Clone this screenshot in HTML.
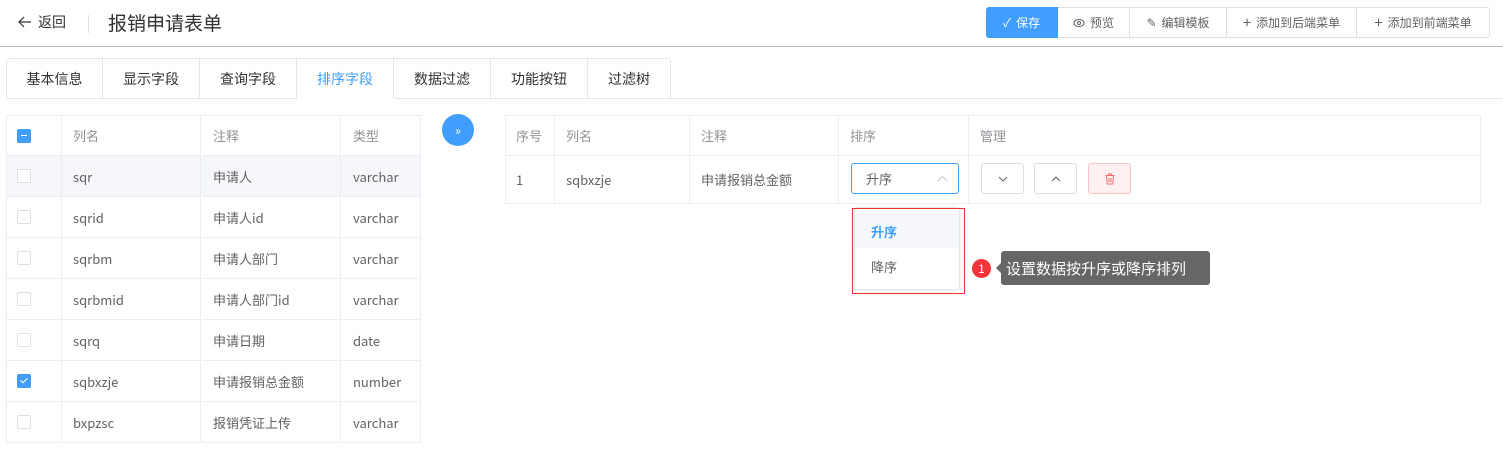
<!DOCTYPE html>
<html><head><meta charset="utf-8"><style>
*{box-sizing:border-box;margin:0;padding:0}
body{width:1503px;height:453px;background:#fff;font-family:"Noto Sans CJK SC","Liberation Sans",sans-serif;color:#606266;font-size:13px;position:relative;overflow:hidden}
.a{position:absolute}
.c{display:flex;align-items:center}
.tb{position:absolute;top:7px;height:31px;border:1px solid #dcdfe6;border-left:none;display:flex;align-items:center;justify-content:center;font-size:12px;color:#606266;background:#fff;gap:5px}
.tab{position:absolute;top:58px;height:41px;border:1px solid #e4e7ed;border-left:none;display:flex;align-items:center;justify-content:center;font-size:14px;color:#303133;background:#fff}
.cell{position:absolute;border-right:1px solid #ebeef5;border-bottom:1px solid #ebeef5;display:flex;align-items:center;padding-left:11px;font-size:13px;color:#606266;line-height:1}
.hd{color:#909399}
.cb{width:14px;height:14px;border:1px solid #dcdfe6;border-radius:2px;background:#fff;position:absolute;left:17px}
.btn{position:absolute;top:163px;width:43px;height:31px;border:1px solid #dcdfe6;border-radius:3px;display:flex;align-items:center;justify-content:center}
</style></head><body>
<div class="a c" style="left:18px;top:12px;font-size:14px;color:#303133;gap:6px"><svg width="14" height="12" viewBox="0 0 14 12"><path d="M13 6H2M6 1L1 6l5 5" stroke="#303133" stroke-width="1.2" fill="none"/></svg>返回</div>
<div class="a" style="left:88px;top:15px;width:1px;height:18px;background:#dcdfe6"></div>
<div class="a" style="left:108px;top:9px;font-size:19px;color:#303133">报销申请表单</div>
<div class="tb" style="left:986px;width:72px;background:#409eff;border-color:#409eff;color:#fff;border-radius:3px 0 0 3px"><span>✓</span>保存</div>
<div class="tb" style="left:1058px;width:72px"><svg width="12" height="10" viewBox="0 0 12 10"><ellipse cx="6" cy="5" rx="5" ry="3.5" stroke="#606266" fill="none"/><circle cx="6" cy="5" r="1.5" stroke="#606266" fill="none"/></svg>预览</div>
<div class="tb" style="left:1130px;width:97px"><span>✎</span>编辑模板</div>
<div class="tb" style="left:1227px;width:130px"><span style="font-size:15px">+</span>添加到后端菜单</div>
<div class="tb" style="left:1357px;width:133px;border-radius:0 3px 3px 0"><span style="font-size:15px">+</span>添加到前端菜单</div>
<div class="a" style="left:0;top:46px;width:1503px;height:1px;background:#c0c0c0"></div>
<div class="a" style="left:6px;top:98px;width:1497px;height:1px;background:#e4e7ed"></div>
<div class="tab" style="left:6px;width:97px;border-left:1px solid #e4e7ed;border-radius:3px 0 0 0">基本信息</div>
<div class="tab" style="left:103px;width:97px">显示字段</div>
<div class="tab" style="left:200px;width:97px">查询字段</div>
<div class="tab" style="left:297px;width:97px;color:#409eff;border-bottom-color:#fff">排序字段</div>
<div class="tab" style="left:394px;width:97px">数据过滤</div>
<div class="tab" style="left:491px;width:97px">功能按钮</div>
<div class="tab" style="left:588px;width:83px;border-radius:0 3px 0 0">过滤树</div>

<div class="a" style="left:6px;top:115px;width:416px;height:328px;border-left:1px solid #ebeef5;border-top:1px solid #ebeef5"></div>
<div class="a" style="left:7px;top:156px;width:414px;height:40px;background:#f5f7fa"></div>
<div id="lt"></div>
<script>
var rows=[["列名","注释","类型"],["sqr","申请人","varchar"],["sqrid","申请人id","varchar"],["sqrbm","申请人部门","varchar"],["sqrbmid","申请人部门id","varchar"],["sqrq","申请日期","date"],["sqbxzje","申请报销总金额","number"],["bxpzsc","报销凭证上传","varchar"]];
var h="";var xs=[[7,55],[62,139],[202,139],[342,79]];
rows.forEach(function(r,i){var y=116+i*41;var cls=i==0?" hd":"";var hh=i==0?40:41;if(i>0)y=115+i*41;
h+='<div class="cell" style="left:7px;top:'+y+'px;width:55px;height:'+hh+'px">';
if(i==0)h+='<div class="cb" style="left:10px;background:#409eff;border-color:#409eff"><div style="position:absolute;left:3px;top:5px;width:6px;height:1.5px;background:#fff"></div></div>';
else if(i==6)h+='<div class="cb" style="left:10px;background:#409eff;border-color:#409eff"><div style="position:absolute;left:4px;top:1px;width:4px;height:7px;border:solid #fff;border-width:0 1.5px 1.5px 0;transform:rotate(45deg)"></div></div>';
else h+='<div class="cb" style="left:10px"></div>';
h+='</div>';
for(var j=0;j<3;j++)h+='<div class="cell'+cls+'" style="left:'+xs[j+1][0]+'px;top:'+y+'px;width:'+xs[j+1][1]+'px;height:'+hh+'px">'+r[j]+'</div>';});
document.getElementById("lt").innerHTML=h;
</script>

<div class="a c" style="left:442px;top:114px;width:32px;height:32px;border-radius:50%;background:#409eff;justify-content:center;color:#fff;font-size:12px">»</div>

<div class="a" style="left:505px;top:115px;width:976px;height:89px;border-left:1px solid #ebeef5;border-top:1px solid #ebeef5"></div>
<div class="cell hd" style="left:506px;top:116px;width:49px;height:40px;padding-left:10px">序号</div>
<div class="cell hd" style="left:555px;top:116px;width:135px;height:40px">列名</div>
<div class="cell hd" style="left:690px;top:116px;width:149px;height:40px">注释</div>
<div class="cell hd" style="left:839px;top:116px;width:130px;height:40px">排序</div>
<div class="cell hd" style="left:969px;top:116px;width:512px;height:40px">管理</div>
<div class="cell" style="left:506px;top:156px;width:49px;height:48px;padding-left:10px">1</div>
<div class="cell" style="left:555px;top:156px;width:135px;height:48px">sqbxzje</div>
<div class="cell" style="left:690px;top:156px;width:149px;height:48px">申请报销总金额</div>
<div class="cell" style="left:839px;top:156px;width:130px;height:48px"></div>
<div class="cell" style="left:969px;top:156px;width:512px;height:48px"></div>
<div class="a c" style="left:851px;top:163px;width:108px;height:31px;border:1px solid #409eff;border-radius:3px;padding-left:14px;color:#606266">升序<svg class="a" style="right:10px;top:11px" width="11" height="7" viewBox="0 0 11 7"><path d="M1 6l4.5-4.5L10 6" stroke="#c0c4cc" fill="none"/></svg></div>
<div class="btn" style="left:981px"><svg width="10" height="6" viewBox="0 0 10 6"><path d="M1 1l4 4 4-4" stroke="#606266" fill="none"/></svg></div>
<div class="btn" style="left:1034px"><svg width="10" height="6" viewBox="0 0 10 6"><path d="M1 5l4-4 4 4" stroke="#606266" fill="none"/></svg></div>
<div class="btn" style="left:1088px;background:#fef0f0;border-color:#fbc4c4"><svg width="10" height="12" viewBox="0 0 10 12"><path d="M0.5 2.5h9M3.5 2.5V1h3v1.5M1.5 2.5l.7 8.5h5.6l.7-8.5M4 5v4M6 5v4" stroke="#f56c6c" fill="none"/></svg></div>

<div class="a" style="left:854px;top:207px;width:106px;height:83px;background:#fff;border:1px solid #e4e7ed;border-radius:3px;box-shadow:0 2px 8px rgba(0,0,0,.08)"></div>
<div class="a c" style="left:855px;top:214px;width:104px;height:34px;background:#f5f7fa;color:#409eff;font-weight:bold;padding-left:16px">升序</div>
<div class="a c" style="left:855px;top:249px;width:104px;height:34px;color:#606266;padding-left:16px">降序</div>
<div class="a" style="left:852px;top:208px;width:113px;height:86px;border:1px solid #e33"></div>

<div class="a c" style="left:972px;top:259px;width:19px;height:19px;border-radius:50%;background:#f0353b;color:#fff;justify-content:center;font-size:12px">1</div>
<div class="a" style="left:996px;top:262px;width:0;height:0;border:6px solid transparent;border-right-color:#666;border-left:0"></div>
<div class="a c" style="left:1001px;top:251px;width:209px;height:34px;background:#666;border-radius:3px;color:#fff;font-size:15px;padding-left:5px">设置数据按升序或降序排列</div>
</body></html>
